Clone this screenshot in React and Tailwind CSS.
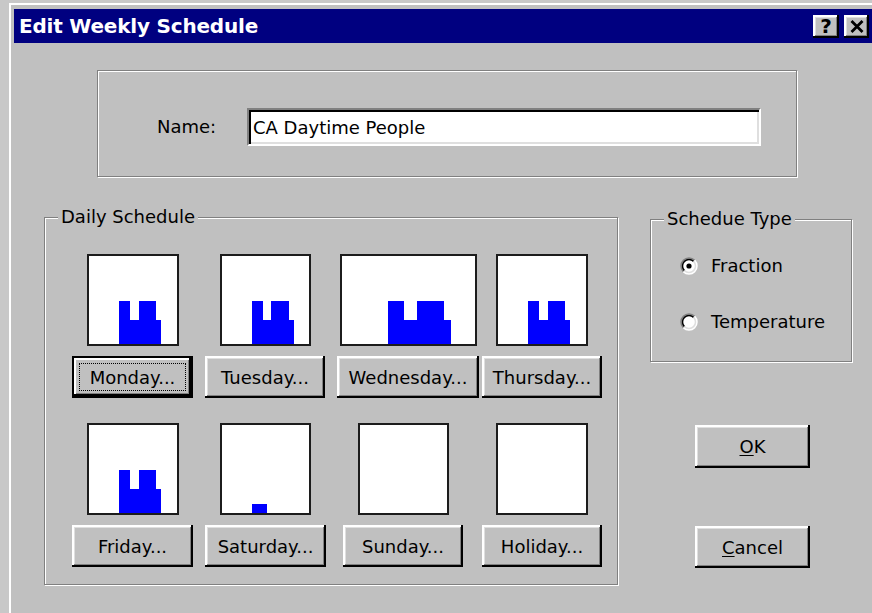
import { useState } from 'react';

// raised 3D edge used by every push button
const raised =
  'bg-[#c0c0c0] shadow-[inset_-2px_-2px_0_#000,inset_2px_2px_0_#fff,inset_-3px_-3px_0_#808080,inset_3px_3px_0_#dfdfdf]';

const rows = [
  [
    { name: 'Monday', width: 'w-[121px]', box: 'w-[92px]', gap: 'ml-0', chart: 'work', isDefault: true },
    { name: 'Tuesday', width: 'w-[120px]', box: 'w-[91px]', gap: 'ml-[12px]', chart: 'work' },
    { name: 'Wednesday', width: 'w-[142px]', box: 'w-[137px]', gap: 'ml-[12px]', chart: 'work' },
    { name: 'Thursday', width: 'w-[120px]', box: 'w-[92px]', gap: 'ml-[3px]', chart: 'work' },
  ],
  [
    { name: 'Friday', width: 'w-[121px]', box: 'w-[92px]', gap: 'ml-0', chart: 'work' },
    { name: 'Saturday', width: 'w-[121px]', box: 'w-[91px]', gap: 'ml-[12px]', chart: 'short' },
    { name: 'Sunday', width: 'w-[120px]', box: 'w-[91px]', gap: 'ml-[17px]', chart: null },
    { name: 'Holiday', width: 'w-[120px]', box: 'w-[92px]', gap: 'ml-[19px]', chart: null },
  ],
];

function DayChart({ kind }) {
  return (
    <svg viewBox="0 0 100 100" preserveAspectRatio="none" className="w-full h-full" shapeRendering="crispEdges">
      {kind === 'work' && (
        <polygon
          fill="#0000ff"
          points="34.4,100 34.4,51.1 46.7,51.1 46.7,72.2 56.7,72.2 56.7,51.1 76.7,51.1 76.7,72.2 82.2,72.2 82.2,100"
        />
      )}
      {kind === 'short' && <rect x="34.4" y="89.8" width="17.8" height="10.2" fill="#0000ff" />}
    </svg>
  );
}

function DayCell({ day }) {
  return (
    <div className={`flex flex-col items-center ${day.width} ${day.gap}`}>
      <div className={`h-[92px] ${day.box} bg-white border-2 border-[#1c1c1c]`}>
        <DayChart kind={day.chart} />
      </div>
      {day.isDefault ? (
        <button className="mt-[10px] w-full h-[42px] border-2 border-black bg-[#c0c0c0] shadow-[inset_-2px_-2px_0_#000,inset_2px_2px_0_#fff,inset_-3px_-3px_0_#808080] p-[5px]">
          <span className="flex items-center justify-center h-full border border-dotted border-black">{day.name}...</span>
        </button>
      ) : (
        <button className={`mt-[10px] w-full h-[42px] ${raised}`}>{day.name}...</button>
      )}
    </div>
  );
}

function Radio({ checked, label, onClick }) {
  return (
    <button onClick={onClick} className="flex items-center text-left">
      <svg width="18" height="18" viewBox="0 0 18 18" className="ml-[29px]">
        <circle cx="9" cy="9" r="8" fill="#fff" />
        <path d="M3.34 14.66 A8 8 0 0 1 14.66 3.34" fill="none" stroke="#808080" strokeWidth="1.5" />
        <path d="M14.66 3.34 A8 8 0 0 1 3.34 14.66" fill="none" stroke="#fff" strokeWidth="1.5" />
        <path d="M4.4 13.6 A6.5 6.5 0 0 1 13.6 4.4" fill="none" stroke="#000" strokeWidth="1.5" />
        <path d="M13.6 4.4 A6.5 6.5 0 0 1 4.4 13.6" fill="none" stroke="#dfdfdf" strokeWidth="1.5" />
        {checked && <circle cx="9" cy="9" r="2.6" fill="#000" />}
      </svg>
      <span className="ml-[13px] leading-[22px]">{label}</span>
    </button>
  );
}

export default function App() {
  const [name, setName] = useState('CA Daytime People');
  const [type, setType] = useState('fraction');

  return (
    <div className="w-[872px] h-[613px] overflow-hidden bg-[#c8c8c8] pl-[9px] pt-[3px] text-black text-[18px] font-['DejaVu_Sans',sans-serif]">
      <div className="w-[870px] h-[620px] bg-[#c0c0c0] shadow-[inset_2px_2px_0_#fff] pt-[6px] pl-[5px]">
        {/* caption bar */}
        <div className="w-[860px] h-[34px] bg-[#000080] flex items-center pl-[5px] pr-[5px]">
          <span className="text-white font-bold text-[20px] tracking-[-0.2px]">Edit Weekly Schedule</span>
          <button className={`ml-auto w-[26px] h-[23px] flex items-center justify-center font-bold text-[20px] leading-none ${raised}`}>?</button>
          <button className={`ml-[5px] w-[25px] h-[23px] flex items-center justify-center ${raised}`}>
            <svg width="14" height="13" viewBox="0 0 14 13">
              <path d="M1.5 1 L12.5 12 M12.5 1 L1.5 12" stroke="#000" strokeWidth="2.8" />
            </svg>
          </button>
        </div>

        {/* schedule name */}
        <div className="mt-[27px] ml-[83px] w-[700px] h-[107px] border border-[#808080] shadow-[inset_1px_1px_0_#fff,1px_1px_0_#fff] pt-[37px] flex items-start">
          <label className="ml-[59px] w-[90px] leading-[38px]">Name:</label>
          <input
            value={name}
            onChange={(e) => setName(e.target.value)}
            className="w-[514px] h-[38px] bg-white border-2 border-t-[#808080] border-l-[#808080] border-b-white border-r-white shadow-[inset_2px_2px_0_#000,inset_-2px_-2px_0_#dfdfdf] pl-[4px] outline-none"
          />
        </div>

        <div className="flex items-start mt-[29px]">
          {/* day thumbnails */}
          <fieldset className="ml-[30px] w-[574px] h-[379px] border border-[#808080] shadow-[inset_1px_1px_0_#fff,1px_1px_0_#fff]">
            <legend className="ml-[13px] px-[3px] leading-[22px] bg-[#c0c0c0]">Daily Schedule</legend>
            <div className="pl-[27px] pt-[26px]">
              {rows.map((row, i) => (
                <div key={i} className={`flex items-start ${i > 0 ? 'mt-[25px]' : ''}`}>
                  {row.map((day) => (
                    <DayCell key={day.name} day={day} />
                  ))}
                </div>
              ))}
            </div>
          </fieldset>

          <div className="ml-[32px] flex flex-col">
            <fieldset className="mt-[2px] w-[202px] h-[154px] border border-[#808080] shadow-[inset_1px_1px_0_#fff,1px_1px_0_#fff]">
              <legend className="ml-[13px] px-[3px] leading-[22px] bg-[#c0c0c0]">Schedue Type</legend>
              <div className="pt-[25px] flex flex-col gap-[34px]">
                <Radio checked={type === 'fraction'} label="Fraction" onClick={() => setType('fraction')} />
                <Radio checked={type === 'temperature'} label="Temperature" onClick={() => setType('temperature')} />
              </div>
            </fieldset>
            <button className={`mt-[63px] ml-[45px] w-[115px] h-[43px] ${raised}`}>
              <span className="underline underline-offset-2">O</span>K
            </button>
            <button className={`mt-[58px] ml-[45px] w-[115px] h-[42px] ${raised}`}>
              <span className="underline underline-offset-2">C</span>ancel
            </button>
          </div>
        </div>
      </div>
    </div>
  );
}
